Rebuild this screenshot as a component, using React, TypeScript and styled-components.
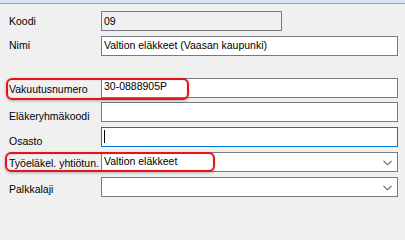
import React from 'react'
import styled, { createGlobalStyle } from 'styled-components'

const GlobalStyle = createGlobalStyle`
  html, body {
    margin: 0;
    padding: 0;
    background: #f0f0f0;
  }
  body {
    font-family: "Liberation Sans", Arial, sans-serif;
    font-size: 10.5px;
    color: #000;
  }
`

const Window = styled.div`
  position: relative;
  width: 405px;
  height: 202px;
  overflow: hidden;
  background: #f0f0f0;
`

const TitleBand = styled.div`
  height: 3px;
  background: #dae5f3;
  border-bottom: 1px solid #a0a0a0;
`

const Form = styled.div`
  display: flex;
  flex-direction: column;
  padding: 0 0 0 9px;
`

const Row = styled.div<{ $top: number }>`
  display: grid;
  grid-template-columns: 92px auto;
  height: 20px;
  margin-top: ${({ $top }) => $top}px;
`

const Label = styled.div<{ $drop: number }>`
  line-height: 12px;
  padding-top: ${({ $drop }) => $drop}px;
  white-space: nowrap;
`

const TextBox = styled.div<{ $width: number; $readOnly?: boolean; $focused?: boolean; $pad: number }>`
  position: relative;
  box-sizing: border-box;
  width: ${({ $width }) => $width}px;
  height: 20px;
  background: ${({ $readOnly }) => ($readOnly ? '#f0f0f0' : '#ffffff')};
  border: 1px solid ${({ $focused }) => ($focused ? '#0078d7' : '#7a7a7a')};
  padding: ${({ $pad }) => $pad}px 0 0 2px;
  line-height: 12px;
  white-space: nowrap;
  overflow: hidden;
`

const Caret = styled.span`
  position: absolute;
  left: 2px;
  top: 2px;
  width: 1px;
  height: 13px;
  background: #000;
`

const Combo = styled.div<{ $pad: number }>`
  box-sizing: border-box;
  width: 297px;
  height: 20px;
  background: #ffffff;
  border: 1px solid #7a7a7a;
  display: flex;
  align-items: flex-start;
  justify-content: space-between;
  padding: ${({ $pad }) => $pad}px 0 0 2px;
  line-height: 12px;
  white-space: nowrap;
`

const Chevron = styled.svg`
  flex: none;
  margin: 5px 5px 0 0;
`

const Highlight = styled.div<{ $left: number; $top: number; $w: number; $h: number }>`
  position: absolute;
  left: ${({ $left }) => $left}px;
  top: ${({ $top }) => $top}px;
  width: ${({ $w }) => $w}px;
  height: ${({ $h }) => $h}px;
  box-sizing: border-box;
  border: 2px solid #e5131c;
  border-radius: 6px;
  box-shadow: 0 1px 3px rgba(0, 0, 0, 0.28), inset 0 0 1px rgba(229, 19, 28, 0.5);
  pointer-events: none;
`

function ComboArrow() {
  return (
    <Chevron width="9" height="6" viewBox="0 0 9 6">
      <polyline points="0.5,0.8 4.5,4.8 8.5,0.8" fill="none" stroke="#606060" strokeWidth="1.1" />
    </Chevron>
  )
}

export default function App() {
  return (
    <Window>
      <GlobalStyle />
      <TitleBand />
      <Form>
        <Row $top={7}>
          <Label $drop={4}>Koodi</Label>
          <TextBox $width={181} $readOnly $pad={3}>09</TextBox>
        </Row>
        <Row $top={5}>
          <Label $drop={3}>Nimi</Label>
          <TextBox $width={297} $pad={2}>Valtion eläkkeet (Vaasan kaupunki)</TextBox>
        </Row>
        <Row $top={22}>
          <Label $drop={5}>Vakuutusnumero</Label>
          <TextBox $width={297} $pad={1}>30-0888905P</TextBox>
        </Row>
        <Row $top={4}>
          <Label $drop={8}>Eläkeryhmäkoodi</Label>
          <TextBox $width={297} $pad={2} />
        </Row>
        <Row $top={5}>
          <Label $drop={8}>Osasto</Label>
          <TextBox $width={297} $focused $pad={2}>
            <Caret />
          </TextBox>
        </Row>
        <Row $top={5}>
          <Label $drop={5}>Työeläkel. yhtiötun.</Label>
          <Combo $pad={2}>
            Valtion eläkkeet
            <ComboArrow />
          </Combo>
        </Row>
        <Row $top={5}>
          <Label $drop={6}>Palkkalaji</Label>
          <Combo $pad={2}>
            <span />
            <ComboArrow />
          </Combo>
        </Row>
      </Form>
      <Highlight $left={6} $top={78} $w={183} $h={22} />
      <Highlight $left={5} $top={152} $w={210} $h={20} />
    </Window>
  )
}
